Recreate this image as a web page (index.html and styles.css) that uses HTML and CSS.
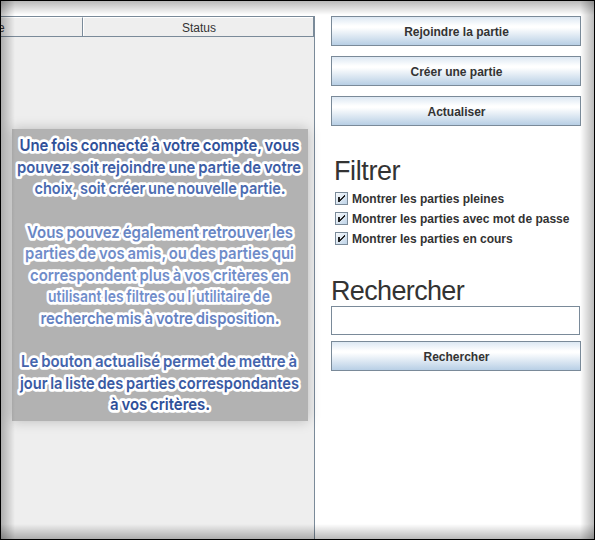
FILE: index.html
```
<!DOCTYPE html>
<html lang="fr">
<head>
<meta charset="utf-8">
<title>Parties</title>
<link rel="stylesheet" href="styles.css">
</head>
<body>
<div class="window">
  <main class="list">
    <div class="table-head"><div class="col name">e</div><div class="col status">Status</div></div>
    <section class="help">
      <svg class="help-text" width="296" height="292" viewBox="12 129 296 292">
        <defs>
          <linearGradient id="ink" gradientUnits="userSpaceOnUse" x1="0" y1="139" x2="0" y2="410">
            <stop offset="0" stop-color="#2c4c96"/><stop offset=".22" stop-color="#5070b5"/><stop offset=".38" stop-color="#6e8bc8"/><stop offset=".6" stop-color="#718dca"/><stop offset=".8" stop-color="#4868b0"/><stop offset="1" stop-color="#2c4c96"/>
          </linearGradient>
        </defs>
        <use class="halo" href="#lines"/>
        <g id="lines">
          <text x="19.5" y="151" textLength="280" lengthAdjust="spacingAndGlyphs">Une fois connecté à votre compte, vous</text>
          <text x="17" y="173" textLength="284" lengthAdjust="spacingAndGlyphs">pouvez soit rejoindre une partie de votre</text>
          <text x="34.5" y="194" textLength="251" lengthAdjust="spacingAndGlyphs">choix, soit créer une nouvelle partie.</text>
          <text x="27" y="238" textLength="266" lengthAdjust="spacingAndGlyphs">Vous pouvez également retrouver les</text>
          <text x="25" y="259" textLength="269" lengthAdjust="spacingAndGlyphs">parties de vos amis, ou des parties qui</text>
          <text x="30" y="281" textLength="259" lengthAdjust="spacingAndGlyphs">correspondent plus à vos critères en</text>
          <text x="48" y="302" textLength="222" lengthAdjust="spacingAndGlyphs">utilisant les filtres ou l´utilitaire de</text>
          <text x="40.5" y="324" textLength="239" lengthAdjust="spacingAndGlyphs">recherche mis à votre disposition.</text>
          <text x="21" y="367" textLength="276" lengthAdjust="spacingAndGlyphs">Le bouton actualisé permet de mettre à</text>
          <text x="20" y="389" textLength="279" lengthAdjust="spacingAndGlyphs">jour la liste des parties correspondantes</text>
          <text x="110" y="410" textLength="100" lengthAdjust="spacingAndGlyphs">à vos critères.</text>
        </g>
      </svg>
    </section>
  </main>
  <aside class="side">
    <button class="btn">Rejoindre la partie</button>
    <button class="btn">Créer une partie</button>
    <button class="btn">Actualiser</button>
    <h2 class="filter-title">Filtrer</h2>
    <div class="check"><svg class="box" viewBox="0 0 13 13"><path d="M3 5h2v2h1v-1h1v-1h1v-1h1v-1h1v2h-1v1h-1v1h-1v1h-1v1h-1v1h-2z"/></svg>Montrer les parties pleines</div>
    <div class="check"><svg class="box" viewBox="0 0 13 13"><path d="M3 5h2v2h1v-1h1v-1h1v-1h1v-1h1v2h-1v1h-1v1h-1v1h-1v1h-1v1h-2z"/></svg>Montrer les parties avec mot de passe</div>
    <div class="check"><svg class="box" viewBox="0 0 13 13"><path d="M3 5h2v2h1v-1h1v-1h1v-1h1v-1h1v2h-1v1h-1v1h-1v1h-1v1h-1v1h-2z"/></svg>Montrer les parties en cours</div>
    <h2 class="search-title">Rechercher</h2>
    <input class="field" type="text" aria-label="Rechercher">
    <button class="btn">Rechercher</button>
  </aside>
  <div class="vignette"></div>
</div>
</body>
</html>
```
FILE: styles.css
```
* { box-sizing: border-box; }
body { margin: 0; }
.window {
  position: relative;
  display: flex;
  width: 595px;
  height: 540px;
  border: 1px solid #000;
  background: #fff;
  overflow: hidden;
  font: 12px "Liberation Sans", Arial, sans-serif;
  color: #333;
}
.list {
  width: 314px;
  margin-top: 15px;
  background: #eee;
  border-right: 1px solid #7a8a99;
}
.table-head {
  display: flex;
  height: 21px;
  border-top: 1px solid #7a8a99;
  border-bottom: 1px solid #7a8a99;
  border-right: 1px solid #7a8a99;
}
.col { line-height: 21px; border-top: 1px solid #fff; height: 19px; }
.name { width: 82px; border-right: 1px solid #7a8a99; text-indent: -3px; }
.status { flex: 1; border-left: 1px solid #fff; text-align: center; padding-left: 1px; }
.help {
  width: 296px;
  height: 292px;
  margin: 92px 0 0 11px;
  background: #b2b2b2;
  box-shadow: 0 0 12px rgba(0, 0, 0, .22);
}
.help-text {
  display: block;
  overflow: visible;
  font: 600 16.5px Inter, sans-serif;
  word-spacing: -1px;
  fill: url(#ink);
}
.halo {
  stroke: #fff;
  stroke-width: 5.5px;
  stroke-linejoin: round;
}
.side { width: 250px; margin: 15px 0 0 16px; }
.btn {
  display: block;
  width: 250px;
  height: 30px;
  margin: 0 0 10px;
  padding: 2px 0 0 1px;
  border: 1px solid #7a8a99;
  background: linear-gradient(#dde8f3 0%, #fff 32%, #fff 38%, #b8cfe5 100%);
  font: bold 12px "Liberation Sans", Arial, sans-serif;
  line-height: 15px;
  color: #333;
}
h2 { font-weight: normal; font-size: 27px; line-height: 32px; letter-spacing: -.65px; margin: 0; }
.filter-title { margin: 29px 0 0 3px; height: 34px; letter-spacing: -.4px; }
.check {
  display: flex;
  align-items: center;
  height: 20px;
  padding-left: 4px;
  gap: 4px;
  font-weight: bold;
  white-space: nowrap;
}
.box {
  width: 13px;
  height: 13px;
  margin-bottom: 1px;
  background: linear-gradient(135deg, #fff, #b8cfe5);
  outline: 1px solid #7a8a99;
  outline-offset: -1px;
  fill: #222;
}
.search-title { margin-top: 26px; height: 31px; }
.field {
  display: block;
  width: 249px;
  height: 29px;
  margin: 0 0 6px;
  border: 1px solid #7a8a99;
  background: #fff;
}
.vignette {
  position: absolute;
  inset: 0;
  pointer-events: none;
  background:
    linear-gradient(rgba(0, 0, 0, .27), transparent) top / 100% 14px no-repeat,
    linear-gradient(transparent, rgba(0, 0, 0, .27)) bottom / 100% 15px no-repeat,
    linear-gradient(90deg, rgba(0, 0, 0, .27), transparent) left / 14px 100% no-repeat,
    linear-gradient(90deg, transparent, rgba(0, 0, 0, .27)) right / 14px 100% no-repeat;
}
```
